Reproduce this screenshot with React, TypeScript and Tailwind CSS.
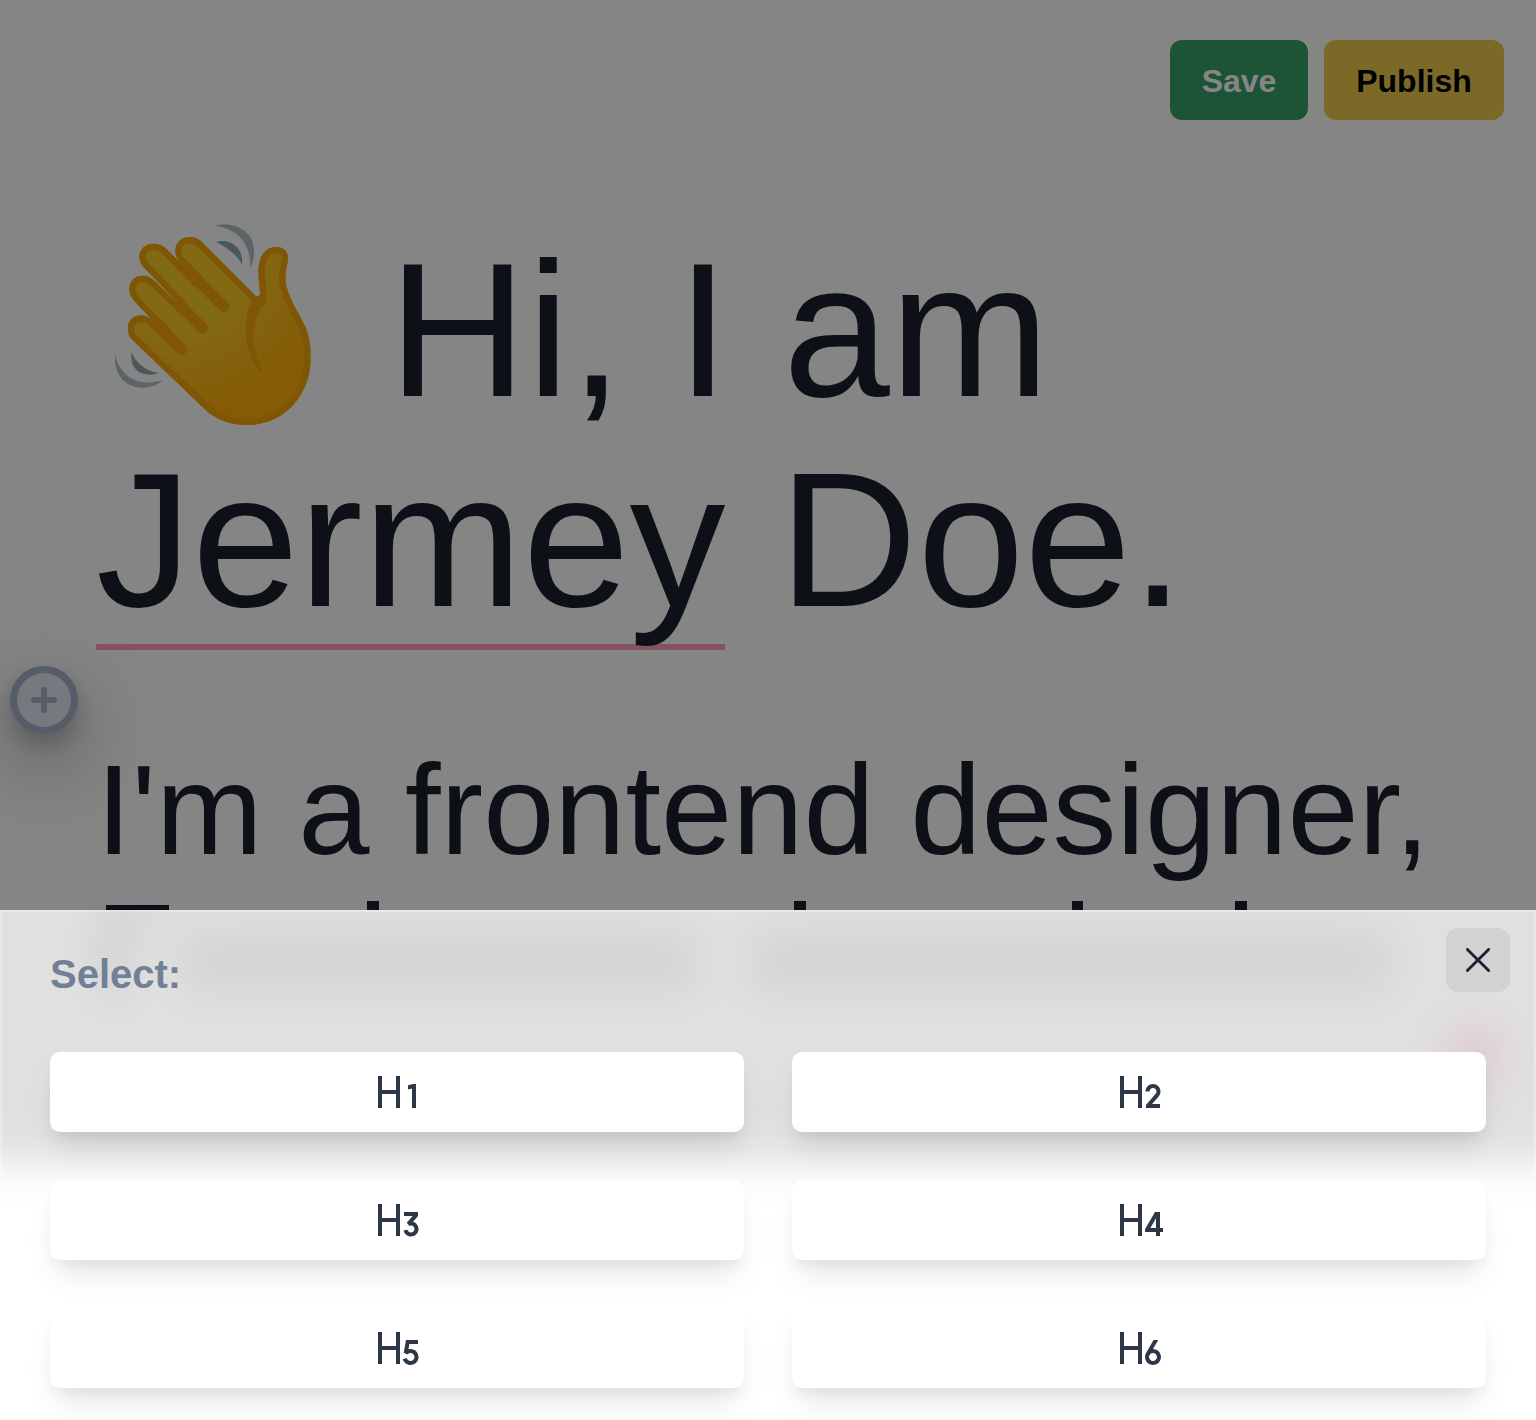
import { RiH1, RiH2, RiH3, RiH4, RiH5, RiH6 } from "react-icons/ri";

const headings = [RiH1, RiH2, RiH3, RiH4, RiH5, RiH6];

const HAND =
  "M492 271 C494 240 487 215 487 185 C487 140 505 111 543 111 C565 111 578 128 576 148 C574 165 568 185 568 208 C570 250 605 305 628 350 C640 380 644 405 644 445 C644 560 560 645 455 645 C400 645 358 627 325 596 L107 388 C86 362 92 318 135 316 C150 316 160 322 170 331 L205 364 L163 324 L112 270 C88 240 100 197 141 197 C158 198 166 204 176 213 L258 291 L143 172 C118 145 130 101 172 101 C190 101 203 108 214 119 L306 214 L250 155 C225 125 240 81 280 81 C298 81 308 87 320 98 Z";

function WavingHand() {
  return (
    <svg
      role="img"
      aria-label="Waving hand"
      viewBox="0 0 720 690"
      className="-mr-px h-[230px] w-[240px] shrink-0"
    >
      <defs>
        <radialGradient id="skin" gradientUnits="userSpaceOnUse" cx="250" cy="130" r="480">
          <stop offset="0.4" stopColor="#facc2a" />
          <stop offset="1" stopColor="#ffae0c" />
        </radialGradient>
        <clipPath id="hand">
          <path d={HAND} />
        </clipPath>
      </defs>
      <path d={HAND} fill="url(#skin)" />
      <path d={HAND} fill="none" stroke="#f2a60c" strokeWidth="38" strokeLinejoin="round" clipPath="url(#hand)" />
      <g stroke="#f2a60c" strokeWidth="33" strokeLinecap="round">
        <path d="M306 212L383 290M256 290L320 354M205 366L258 419" />
      </g>
      <path
        d="M472 262C440 325 438 415 488 483Q494 489 498 481C462 400 468 340 500 282Q512 268 507 250Z"
        fill="#f2a60c"
      />
      <path d="M355 47C400 34 478 52 474 130Q472 158 463 172C464 115 440 58 355 47Z" fill="#b1c0c6" />
      <path d="M361 96C400 84 444 112 438 163C422 135 400 117 361 96Z" fill="#92a7af" />
      <path d="M57 432C68 492 118 534 200 511C160 550 50 545 57 432Z" fill="#b1c0c6" />
      <path d="M107 427C120 460 150 484 187 489C150 504 98 488 107 427Z" fill="#92a7af" />
    </svg>
  );
}

function TopBar() {
  return (
    <header className="flex justify-end gap-4 px-8 pt-10 text-[32px] font-bold">
      <button className="h-20 w-[138px] rounded-xl bg-[#38a169] pt-[2px] text-white">Save</button>
      <button className="h-20 w-[180px] rounded-xl bg-[#ecc94b] pt-[2px] text-black">Publish</button>
    </header>
  );
}

function AddButton() {
  return (
    <button
      aria-label="Add block"
      className="absolute top-[666px] left-[10px] flex size-[68px] items-center justify-center rounded-full border-[7px] border-[#a5b2c7] bg-[#e2e8f0] shadow-[0_10px_20px_rgba(0,0,0,0.2),0_30px_80px_rgba(0,0,0,0.4)]"
    >
      <svg viewBox="0 0 28 28" className="size-7" fill="none" stroke="#a5b2c7" strokeWidth="6" strokeLinecap="round">
        <path d="M14 4v20M4 14h20" />
      </svg>
    </button>
  );
}

/* Tops of the paragraph's next line, cut off by the drawer. */
function ClippedLine() {
  return (
    <div className="ml-[10px] flex h-3 items-end">
      <span className="mr-[198px] h-2 w-[63px] bg-current" />
      <span className="mr-[415px] h-3 w-3 bg-current" />
      <span className="mr-[266px] h-3 w-3 bg-current" />
      <span className="mr-[152px] h-3 w-[11px] bg-current" />
      <span className="h-3 w-3 bg-current" />
    </div>
  );
}

function Document() {
  return (
    <main className="px-24 pt-[90px] whitespace-nowrap">
      <h1 className="text-[192px] leading-[210px]">
        <div className="flex h-[225px] items-start">
          <WavingHand />
          <span className="mt-[15px] whitespace-pre"> Hi, I am</span>
        </div>
        <div className="flex">
          <span className="h-[215px] border-b-[6px] border-[#ffa0b4]">Jermey</span>
          <span className="whitespace-pre"> Doe.</span>
        </div>
      </h1>
      <p className="mt-[90px] mb-[21px] text-[128px] leading-[140px]">I'm a frontend designer,</p>
      <ClippedLine />
    </main>
  );
}

/* Softly blurred page content seen through the frosted drawer. */
function Frost() {
  return (
    <div className="absolute inset-0 overflow-hidden bg-white">
      <div className="-mx-20 -mt-20 h-[334px] bg-[#858585] px-20 pt-20 blur-[20px]">
        <div className="ml-[106px] flex h-[84px] items-end">
          <span className="h-full w-4 bg-[#0d1117]" />
          <span className="h-full w-12 border-t-8 border-[#0d1117]" />
          <span className="mr-12 ml-2 h-[66px] w-[522px] rounded-3xl bg-[#0d1117]/40" />
          <span className="h-[66px] w-[646px] rounded-3xl bg-[#0d1117]/40" />
        </div>
        <div className="mt-8 mr-8 ml-auto size-[60px] rounded-full bg-[#7c2a34]" />
      </div>
      <div className="absolute inset-0 border-2 border-white/30 bg-white/75" />
    </div>
  );
}

function Drawer() {
  return (
    <section className="absolute inset-x-0 bottom-0 h-[510px] px-[50px] pt-[2px]">
      <Frost />
      <div className="relative flex h-[140px] items-start justify-between">
        <h2 className="pt-[38px] text-[40px] leading-[48px] font-bold text-[#718096]">Select:</h2>
        <button aria-label="Close" className="mt-4 -mr-6 flex size-16 items-center justify-center rounded-xl bg-black/6">
          <svg viewBox="0 0 24 24" className="size-6" fill="none" stroke="#1a202c" strokeWidth="2.8" strokeLinecap="round">
            <path d="M1.4 1.4l21.2 21.2M22.6 1.4L1.4 22.6" />
          </svg>
        </button>
      </div>
      <div className="relative grid grid-cols-2 gap-12">
        {headings.map((Icon, i) => (
          <button
            key={i}
            aria-label={"Heading " + (i + 1)}
            className="flex h-20 items-center justify-center rounded-[10px] bg-white pl-[2px] text-[48px] text-[#2d3748] shadow-[0_20px_30px_-6px_rgba(0,0,0,0.1),0_8px_12px_-4px_rgba(0,0,0,0.05)]"
          >
            <Icon />
          </button>
        ))}
      </div>
    </section>
  );
}

export default function App() {
  return (
    <div className="relative h-[1420px] w-[1536px] overflow-hidden bg-white font-['Liberation_Sans',Arial,sans-serif] text-[#1a202c]">
      <TopBar />
      <Document />
      <AddButton />
      <div className="absolute inset-x-0 top-0 h-[1160px] bg-black/48" />
      <Drawer />
    </div>
  );
}
